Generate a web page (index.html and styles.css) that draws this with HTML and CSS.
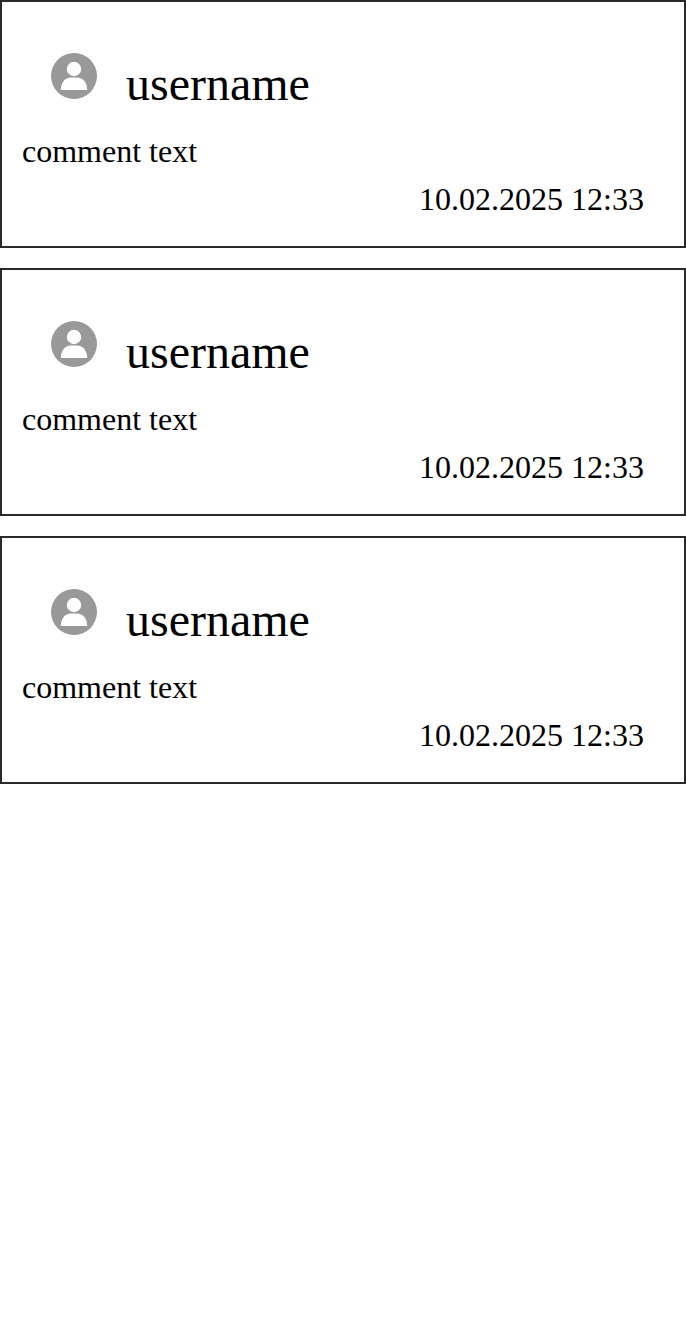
FILE: index.html
```html
<!DOCTYPE html>
<html lang="en">
<head>
<meta charset="utf-8">
<meta name="viewport" content="width=device-width, initial-scale=1">
<title>Comments</title>
<link rel="stylesheet" href="styles.css">
</head>
<body>
<svg class="symbols" aria-hidden="true">
  <symbol id="avatar" viewBox="0 0 48 48">
    <circle cx="24" cy="24" r="23" fill="#999"/>
    <circle cx="24" cy="17" r="7.2" fill="#fff"/>
    <path d="M10.8 38C10.8 31 15 25.6 21 25.6H27C33 25.6 37.2 31 37.2 38Z" fill="#fff"/>
  </symbol>
</svg>
<main class="comments">
  <article class="comment">
    <header class="comment-header">
      <svg class="avatar" aria-hidden="true"><use href="#avatar"/></svg>
      <span class="username">username</span>
    </header>
    <p class="comment-text">comment text</p>
    <time class="comment-date" datetime="2025-02-10T12:33">10.02.2025 12:33</time>
  </article>
  <article class="comment">
    <header class="comment-header">
      <svg class="avatar" aria-hidden="true"><use href="#avatar"/></svg>
      <span class="username">username</span>
    </header>
    <p class="comment-text">comment text</p>
    <time class="comment-date" datetime="2025-02-10T12:33">10.02.2025 12:33</time>
  </article>
  <article class="comment">
    <header class="comment-header">
      <svg class="avatar" aria-hidden="true"><use href="#avatar"/></svg>
      <span class="username">username</span>
    </header>
    <p class="comment-text">comment text</p>
    <time class="comment-date" datetime="2025-02-10T12:33">10.02.2025 12:33</time>
  </article>
</main>
</body>
</html>
```

FILE: styles.css
```css
* {
  box-sizing: border-box;
}

body {
  margin: 0;
  background: #fff;
  color: #000;
  font-family: "Liberation Serif", "Times New Roman", serif;
  font-size: 32px;
  line-height: 48px;
}

.symbols {
  display: none;
}

.comments {
  display: flex;
  flex-direction: column;
  gap: 20px;
}

.comment {
  display: flex;
  flex-direction: column;
  padding: 20px 20px 23px;
  border: 2px solid #2a292b;
}

.comment-header {
  display: flex;
  align-items: flex-start;
  gap: 28px;
  padding: 30px 28px 15px;
}

.avatar {
  flex: none;
  width: 48px;
  height: 48px;
}

.username {
  padding-top: 4px;
  font-size: 48px;
  line-height: 56px;
}

.comment-text {
  margin: 0;
}

.comment-date {
  align-self: flex-end;
  padding-right: 20px;
}
```
